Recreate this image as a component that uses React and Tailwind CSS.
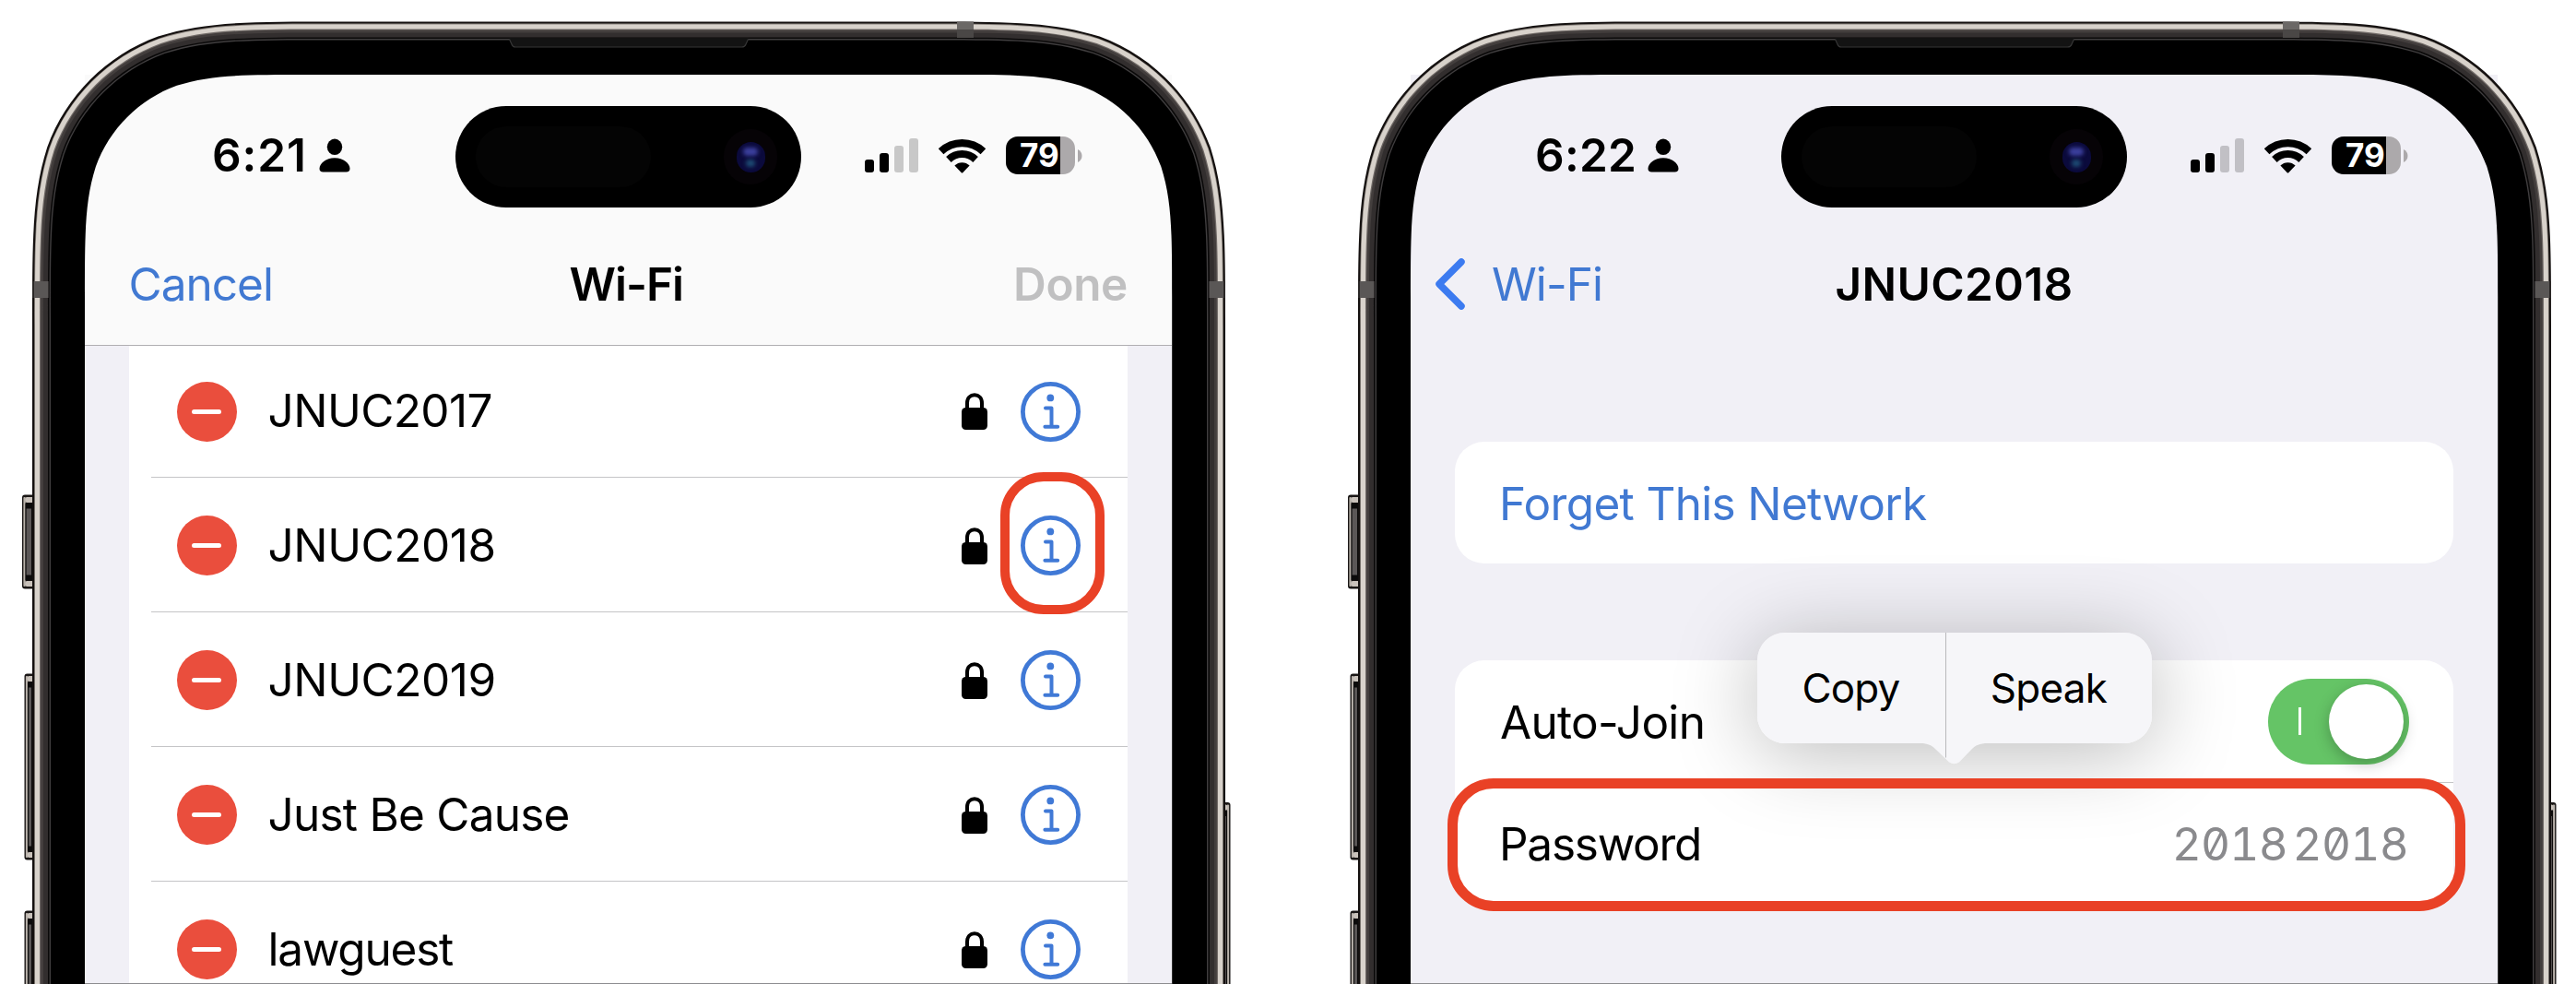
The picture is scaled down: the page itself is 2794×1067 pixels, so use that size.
// Builds the top half of a continuous-curvature rounded shell; sides run off the bottom edge.
function shell(inset, radius, left = 35, right = 1329, top = 23.4) {
  const l = left + inset;
  const r = right - inset;
  const t = top + inset;
  const k = radius;
  return [
    `M${l} 1100`,
    `L${l} ${t + 1.52866 * k}`,
    `C${l} ${t + 1.08849 * k} ${l} ${t + 0.8684 * k} ${l + 0.07491 * k} ${t + 0.63149 * k}`,
    `C${l + 0.16906 * k} ${t + 0.37282 * k} ${l + 0.37282 * k} ${t + 0.16906 * k} ${l + 0.63149 * k} ${t + 0.07491 * k}`,
    `C${l + 0.8684 * k} ${t} ${l + 1.08849 * k} ${t} ${l + 1.52866 * k} ${t}`,
    `L${r - 1.52866 * k} ${t}`,
    `C${r - 1.08849 * k} ${t} ${r - 0.8684 * k} ${t} ${r - 0.63149 * k} ${t + 0.07491 * k}`,
    `C${r - 0.37282 * k} ${t + 0.16906 * k} ${r - 0.16906 * k} ${t + 0.37282 * k} ${r - 0.07491 * k} ${t + 0.63149 * k}`,
    `C${r} ${t + 0.8684 * k} ${r} ${t + 1.08849 * k} ${r} ${t + 1.52866 * k}`,
    `L${r} 1100Z`,
  ].join(" ");
}

const SCREEN_HOLE = shell(57.4, 158, 34.6, 1328.6, 23.6);
const BAND_HOLE = shell(32, 184);

const LAYERS = [
  [0, 216, "#14100f"],
  [2.2, 214, "#8d8781"],
  [3, 213, "#d8d2cb"],
  [8, 208, "#6f6966"],
  [9.2, 207, "#433e3d"],
  [12, 204, "#322e2e"],
  [17, 199, "#0a0909"],
  [18.6, 197.5, "#403e3f"],
];

function SideButton({ x, y, h, w, flip }) {
  return (
    <g transform={flip ? `translate(${x + w} ${y}) scale(-1 1)` : `translate(${x} ${y})`}>
      <rect x="0" y="0" width={w + 4} height={h} rx="3" fill="#1a1716" />
      <rect x="1.4" y="2.5" width="2.4" height={h - 5} rx="1" fill="#b9b2ab" />
      <rect x="3.2" y="2.5" width={w} height="6" rx="2" fill="#c9c2bb" />
      <rect x="3.2" y={h - 8.5} width={w} height="6" rx="2" fill="#c9c2bb" />
      <rect x="3.4" y="9" width={w} height={h - 18} fill="#0c0b0b" />
      <rect x="4.6" y="15" width={w - 5.6} height={h - 30} fill="#5b5757" />
    </g>
  );
}

function Bezel() {
  return (
    <svg className="pointer-events-none absolute inset-0" width="1438" height="1067" viewBox="0 0 1438 1067">
      <SideButton x={24} y={536.5} h={102} w={11} />
      <SideButton x={26.5} y={730.5} h={202} w={8.5} />
      <SideButton x={26.5} y={987.5} h={202} w={8.5} />
      <SideButton x={1325} y={870} h={320} w={9.5} flip />
      {LAYERS.map(([inset, radius, fill]) => (
        <path key={inset} d={`${shell(inset, radius)} ${BAND_HOLE}`} fill={fill} fillRule="evenodd" />
      ))}
      <path d={`${shell(20, 196)} ${SCREEN_HOLE}`} fill="#000" fillRule="evenodd" />
      <path d="M552.5 42.5L555 48Q556 51 559 51H804.5Q808 51 809 48L811.5 42.5V41H552.5Z" fill="#131313" />
      <path d="M552.5 42.5L555 48Q556 51 559 51H804.5Q808 51 809 48L811.5 42.5" fill="none" stroke="#363636" strokeWidth="1.2" />
      <rect x="35" y="305" width="17.5" height="18" fill="#5a5756" />
      <rect x="1311.5" y="305" width="17.5" height="18" fill="#5a5756" />
      <rect x="1038" y="23.4" width="18" height="8.6" fill="#6b6866" />
      <rect x="1038" y="32" width="18" height="9" fill="#4a4746" />
      <rect x="35" y="305" width="2" height="18" fill="#2a2726" />
      <rect x="1327" y="305" width="2" height="18" fill="#2a2726" />
    </svg>
  );
}

function PersonIcon() {
  return (
    <svg width="34" height="37" viewBox="0 0 34 37" fill="#000">
      <ellipse cx="17" cy="9.3" rx="8.2" ry="8.7" />
      <path d="M17 21.2C26.5 21.2 33.5 27 33.5 33C33.5 35.3 32.2 36.5 29.500 36.5H4.5C1.8 36.5 .5 35.3 .5 33C.5 27 7.5 21.2 17 21.2Z" />
    </svg>
  );
}

function WifiIcon() {
  return (
    <svg width="51" height="38" viewBox="0 0 51 38" fill="none" stroke="#000">
      <path d="M2.6 14.2A33.2 33.2 0 0 1 48.4 14.2" strokeWidth="8.2" />
      <path d="M10.9 23A21 21 0 0 1 40.1 23" strokeWidth="8" />
      <path d="M17.4 29.5A11.5 11.5 0 0 1 33.6 29.5L26.5 37Q25.5 38 24.5 37Z" fill="#000" stroke="none" />
    </svg>
  );
}

function StatusBar({ time, timeClass, dim }) {
  return (
    <div className="flex h-36 pt-[34px]">
      <div className={`flex w-[402px] items-center pb-[3px] ${timeClass}`}>
        <span className="flex-1 font-semibold">{time}</span>
        <PersonIcon />
      </div>
      <div className="flex h-[110px] w-[375px] items-center justify-between rounded-full bg-black pr-[26px] pl-[22px]">
        <div className="h-[66px] w-[190px] rounded-full bg-[#040404]" />
        <div className="flex h-[60px] w-[58px] items-center justify-center rounded-full bg-[#060306]">
          <div className="flex h-[33px] w-[31px] flex-col items-center justify-center gap-1 rounded-full bg-[#0b0a3c]">
            <div className="h-[9px] w-4 rounded-full bg-[#3b3f9c] blur-[2px]" />
            <div className="h-2 w-[10px] rounded-full bg-[#1d4a73] blur-[2px]" />
          </div>
        </div>
      </div>
      <div className="flex w-[402px] items-center pb-[3px] pl-[69px]">
        <div className="flex h-[37px] items-end gap-1.5">
          <div className="h-3.5 w-[10px] rounded-[3px] bg-black" />
          <div className="h-[21px] w-[10px] rounded-[3px] bg-black" />
          <div className={`h-[29px] w-[10px] rounded-[3px] ${dim}`} />
          <div className={`h-[37px] w-[10px] rounded-[3px] ${dim}`} />
        </div>
        <div className="ml-[22px]">
          <WifiIcon />
        </div>
        <div className="ml-[22px] flex h-[41px] w-[75px] items-center overflow-hidden rounded-[13px] bg-[linear-gradient(to_right,#000_59px,#aca9ab_59px)] pl-[15px] text-[35px] leading-none font-bold tracking-normal text-white">
          79
        </div>
        <svg className="ml-[3px]" width="5" height="14" viewBox="0 0 5 14">
          <path d="M0 0C3 1.5 4.5 4 4.5 7S3 12.5 0 14Z" fill="#aca9ab" />
        </svg>
      </div>
    </div>
  );
}

function Phone({ children }) {
  return (
    <div className="relative h-[1067px] w-[1438px] shrink-0 pt-[81px] pl-[92px]">
      <div className="flex h-[986px] w-[1179px] flex-col overflow-hidden bg-[#f1f0f6]">{children}</div>
      <Bezel />
    </div>
  );
}

function LockIcon() {
  return (
    <svg width="28" height="40" viewBox="0 0 28 40">
      <rect x="0" y="16" width="28" height="24" rx="4.5" fill="#000" />
      <path d="M6 18V11C6 5.5 9.5 2.2 14 2.2S22 5.5 22 11V18" fill="none" stroke="#000" strokeWidth="4" />
    </svg>
  );
}

function InfoIcon() {
  return (
    <svg width="65" height="65" viewBox="0 0 65 65" fill="none" stroke="#4079d6">
      <circle cx="32.5" cy="32.5" r="30.1" strokeWidth="4.8" />
      <circle cx="32.3" cy="17.4" r="3.9" fill="#4079d6" stroke="none" />
      <path d="M27 28.6H33.5V48.5M26.4 48.7H40.2" strokeWidth="4" strokeLinecap="round" strokeLinejoin="round" />
    </svg>
  );
}

const NETWORKS = [
  { name: "JNUC2017", track: "tracking-[-0.58px]", size: "h-[143px]" },
  { name: "JNUC2018", track: "tracking-[-0.45px]", size: "h-[146px] pt-0.5", marked: true },
  { name: "JNUC2019", track: "tracking-[-0.45px]", size: "h-[146px] pt-0.5" },
  { name: "Just Be Cause", track: "tracking-[-0.77px]", size: "h-[146px] pt-0.5" },
  { name: "lawguest", track: "tracking-[-1.2px]", size: "h-[146px] pt-0.5" },
];

function NetworkRow({ name, track, size, marked }) {
  return (
    <div className={`ml-6 flex shrink-0 items-center border-b border-[#c5c5c7] pl-[27.5px] ${size}`}>
      <div className="flex size-[65px] items-center justify-center rounded-full bg-[#ea4e3d]">
        <div className="h-[5px] w-8 rounded-full bg-white" />
      </div>
      <span className={`ml-[34px] flex-1 ${track}`}>{name}</span>
      <LockIcon />
      <div className="relative mr-[51px] ml-9">
        <InfoIcon />
        {marked && (
          <div className="absolute -top-[47px] -left-[22px] h-[154px] w-[113px] rounded-[47px] border-[10.5px] border-[#e94126]" />
        )}
      </div>
    </div>
  );
}

function NetworkListScreen() {
  return (
    <Phone>
      <div className="h-[294px] shrink-0 border-b border-[#b0afb2] bg-[#fafafa]">
        <StatusBar time="6:21" timeClass="pl-[138px] pr-[114px] tracking-[0.9px]" dim="bg-[#c8c8c8]" />
        <div className="flex h-[149px] items-start justify-between pt-[50px] pr-12 pl-[47.5px] leading-[66px]">
          <span className="w-60 tracking-[-0.97px] text-[#4179d2]">Cancel</span>
          <span className="-ml-1 font-semibold tracking-[-1.02px]">Wi-Fi</span>
          <span className="w-60 text-right font-semibold tracking-[-0.39px] text-[#c0c0c1]">Done</span>
        </div>
      </div>
      <div className="mx-12 flex min-h-0 flex-1 flex-col overflow-hidden bg-white">
        {NETWORKS.map((n) => (
          <NetworkRow key={n.name} {...n} />
        ))}
      </div>
      <div className="h-px shrink-0 bg-[#8c8c8f]" />
    </Phone>
  );
}

function EditMenu() {
  return (
    <div className="absolute -top-[30px] left-[328px] h-[120px] w-[428px] rounded-[30px] shadow-[0_10px_90px_rgba(0,0,0,0.27)]">
      <div className="flex h-full overflow-hidden rounded-[30px] bg-[#f6f6f9] text-[44px]">
        <span className="flex w-[205px] items-center justify-center border-r border-[#b9b9bc] pr-px tracking-[-0.87px]">Copy</span>
        <span className="flex flex-1 items-center justify-center pr-px tracking-[-0.74px]">Speak</span>
      </div>
      <svg className="absolute top-[119px] left-[177px]" width="73" height="24" viewBox="0 0 73 24">
        <path d="M0 0V1C8 1 12 3 17 8L31 21.5Q36.500 25 42 21.5L55 8C60 3 64 1 73 1V0Z" fill="#f6f6f9" />
        <path d="M27.5 0V16.5" stroke="#b9b9bc" />
      </svg>
    </div>
  );
}

function Toggle() {
  return (
    <div className="flex h-[93px] w-[153px] items-center justify-between rounded-full bg-[#65c466] pr-1.5 pl-[33px]">
      <div className="h-[30px] w-[3px] bg-white" />
      <div className="size-[81px] rounded-full bg-white shadow-[0_5px_16px_rgba(0,0,0,0.25)]" />
    </div>
  );
}

function NetworkDetailScreen() {
  return (
    <Phone>
      <StatusBar time="6:22" timeClass="pl-[135px] pr-[111.5px] tracking-[0.24px]" dim="bg-[#c1c0c5]" />
      <div className="grid h-[254px] shrink-0 grid-cols-3 pt-[50px] leading-[66px]">
        <div className="flex h-[66px] items-center pl-[25px] tracking-[-0.94px] text-[#4179d2]">
          <svg width="36" height="60" viewBox="0 0 36 60">
            <path d="M30 6L6 30L30 54" fill="none" stroke="#3c7bf0" strokeWidth="7.5" strokeLinecap="round" strokeLinejoin="round" />
          </svg>
          <span className="ml-[27px]">Wi-Fi</span>
        </div>
        <span className="text-center font-semibold tracking-[0.34px]">JNUC2018</span>
      </div>
      <div className="mx-12 flex h-[132px] shrink-0 items-center rounded-[32px] bg-white pt-[3px] pl-12 tracking-[-0.67px] text-[#4179d2]">
        Forget This Network
      </div>
      <div className="relative mx-12 mt-[105px] h-[264px] shrink-0 rounded-[32px] bg-white">
        <div className="flex h-[132px] items-center justify-between pr-12 pl-[49px] tracking-[-0.7px]">
          <span className="pt-[3px]">Auto-Join</span>
          <Toggle />
        </div>
        <EditMenu />
        <div className="relative ml-12 flex h-[132px] items-center justify-between border-t border-[#c5c5c7] pt-0.5 pr-[49px] tracking-[-1.25px]">
          Password
          <span className="tracking-[-0.75px] text-[#8a8a8d] slashed-zero tabular-nums [word-spacing:-7px]">2018 2018</span>
          <div className="absolute -top-[5px] -left-14 h-36 w-[1104px] rounded-[50px] border-[11px] border-[#e94126]" />
        </div>
      </div>
      <div className="mt-auto h-px shrink-0 bg-[#8c8c8f]" />
    </Phone>
  );
}

export default function App() {
  return (
    <div className="flex h-[1067px] w-[2794px] overflow-hidden bg-white font-['Inter',sans-serif] text-[49.5px] leading-none text-black">
      <NetworkListScreen />
      <NetworkDetailScreen />
    </div>
  );
}
